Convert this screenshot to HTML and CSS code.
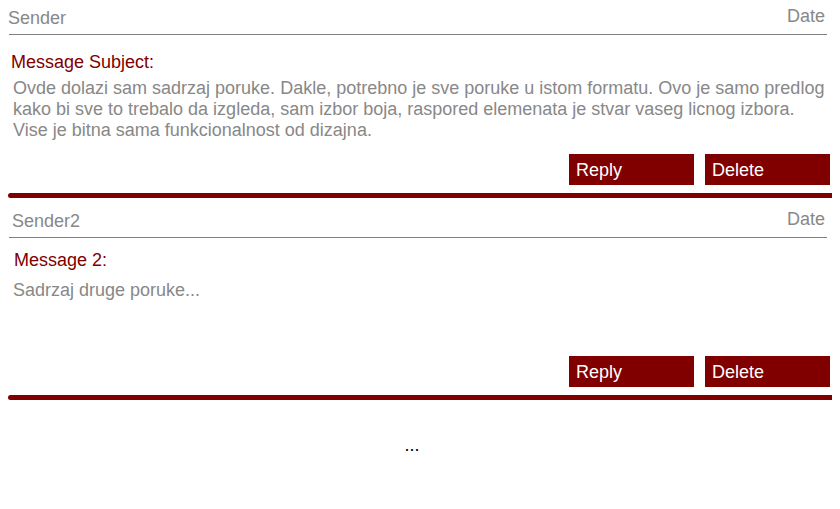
FILE: index.html
```html
<!DOCTYPE html>
<html>
<head>
<meta charset="utf-8">
<link rel="stylesheet" href="styles.css">
</head>
<body>
<div class="message">
  <div class="msg-head">
    <span class="sender">Sender</span>
    <span class="date">Date</span>
  </div>
  <div class="msg-subject">Message Subject:</div>
  <div class="msg-text">Ovde dolazi sam sadrzaj poruke. Dakle, potrebno je sve poruke u istom formatu. Ovo je samo predlog kako bi sve to trebalo da izgleda, sam izbor boja, raspored elemenata je stvar vaseg licnog izbora. Vise je bitna sama funkcionalnost od dizajna.</div>
  <div class="msg-actions">
    <button class="btn">Reply</button>
    <button class="btn">Delete</button>
  </div>
  <div class="msg-rule"></div>
</div>
<div class="message message-second">
  <div class="msg-head">
    <span class="sender">Sender2</span>
    <span class="date">Date</span>
  </div>
  <div class="msg-subject">Message 2:</div>
  <div class="msg-text">Sadrzaj druge poruke...</div>
  <div class="msg-actions">
    <button class="btn">Reply</button>
    <button class="btn">Delete</button>
  </div>
  <div class="msg-rule"></div>
</div>
<div class="more">...</div>
</body>
</html>
```
FILE: styles.css
```css
html, body {
  background: #ffffff;
}
body {
  margin: 8px;
  font-family: "Liberation Sans", Arial, sans-serif;
  font-size: 18px;
  color: #888888;
}
.msg-head {
  display: flex;
  justify-content: space-between;
  align-items: flex-start;
  height: 26px;
  margin: 0 5px 0 1px;
  border-bottom: 1px solid #808080;
}
.sender {
  margin-left: -1px;
}
.date {
  margin-top: -2px;
  padding-right: 2px;
}
.msg-subject {
  margin-top: 17px;
  padding-left: 3px;
  color: #800000;
}
.msg-text {
  margin-top: 5px;
  padding-left: 5px;
}
.msg-actions {
  display: flex;
  justify-content: flex-end;
  gap: 11px;
  margin: 13px 2px 0 0;
}
.btn {
  box-sizing: border-box;
  width: 125px;
  height: 31px;
  padding: 6px 6px 4px 7px;
  border: none;
  background: #800000;
  color: #ffffff;
  font-family: "Liberation Sans", Arial, sans-serif;
  font-size: 18px;
  line-height: normal;
  text-align: left;
  cursor: pointer;
}
.msg-rule {
  height: 5px;
  margin: 8px -4px 0 0;
  border-radius: 3px;
  background: #800000;
}
.message-second .msg-head {
  margin-top: 13px;
}
.message-second .sender {
  margin-left: 3px;
}
.message-second .msg-subject {
  margin-top: 12px;
  padding-left: 6px;
}
.message-second .msg-text {
  margin-top: 9px;
  min-height: 76px;
}
.message-second .msg-actions {
  margin-top: 0;
}
.more {
  margin-top: 35px;
  width: 808px;
  text-align: center;
  color: #000000;
}
```
